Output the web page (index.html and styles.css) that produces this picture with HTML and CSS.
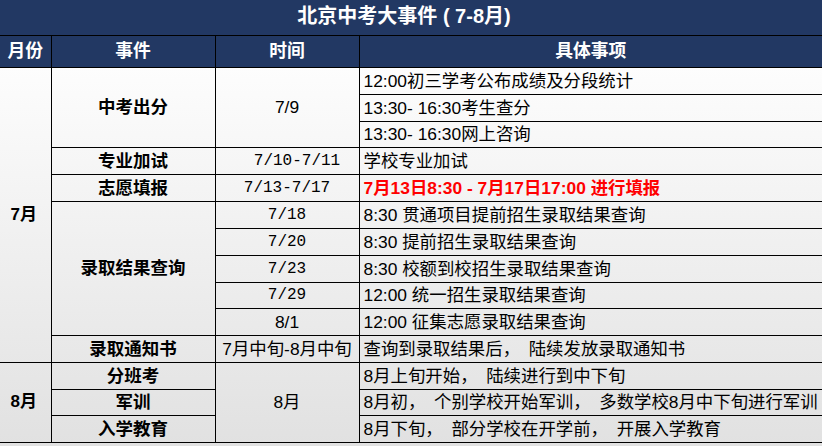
FILE: index.html
```html
<!DOCTYPE html>
<html lang="zh-CN">
<head>
<meta charset="utf-8">
<title>北京中考大事件</title>
<link rel="stylesheet" href="styles.css">
</head>
<body>
<table class="sched">
  <colgroup>
    <col class="c-month">
    <col class="c-event">
    <col class="c-time">
    <col class="c-detail">
  </colgroup>
  <thead>
    <tr class="title-row"><th colspan="4" class="title">北京中考大事件 ( 7-8月)</th></tr>
    <tr class="head-row">
      <th>月份</th><th>事件</th><th>时间</th><th>具体事项</th>
    </tr>
  </thead>
  <tbody>
    <tr>
      <td rowspan="11" class="month">7月</td>
      <td rowspan="3" class="event">中考出分</td>
      <td rowspan="3" class="time">7/9</td>
      <td class="detail">12:00初三学考公布成绩及分段统计</td>
    </tr>
    <tr><td class="detail">13:30- 16:30考生查分</td></tr>
    <tr class="short"><td class="detail">13:30- 16:30网上咨询</td></tr>
    <tr>
      <td class="event">专业加试</td>
      <td class="time mono shift">7/10-7/11</td>
      <td class="detail">学校专业加试</td>
    </tr>
    <tr>
      <td class="event">志愿填报</td>
      <td class="time mono">7/13-7/17</td>
      <td class="detail red">7月13日8:30 - 7月17日17:00 进行填报</td>
    </tr>
    <tr>
      <td rowspan="5" class="event">录取结果查询</td>
      <td class="time mono">7/18</td>
      <td class="detail">8:30 贯通项目提前招生录取结果查询</td>
    </tr>
    <tr><td class="time mono">7/20</td><td class="detail">8:30 提前招生录取结果查询</td></tr>
    <tr><td class="time mono">7/23</td><td class="detail">8:30 校额到校招生录取结果查询</td></tr>
    <tr class="short"><td class="time mono">7/29</td><td class="detail">12:00 统一招生录取结果查询</td></tr>
    <tr><td class="time">8/1</td><td class="detail">12:00 征集志愿录取结果查询</td></tr>
    <tr>
      <td class="event">录取通知书</td>
      <td class="time">7月中旬-8月中旬</td>
      <td class="detail">查询到录取结果后，　陆续发放录取通知书</td>
    </tr>
    <tr>
      <td rowspan="3" class="month">8月</td>
      <td class="event">分班考</td>
      <td rowspan="3" class="time">8月</td>
      <td class="detail">8月上旬开始，　陆续进行到中下旬</td>
    </tr>
    <tr class="short"><td class="event">军训</td><td class="detail">8月初，　个别学校开始军训，　多数学校8月中下旬进行军训</td></tr>
    <tr><td class="event">入学教育</td><td class="detail">8月下旬，　部分学校在开学前，　开展入学教育</td></tr>
  </tbody>
</table>
</body>
</html>
```

FILE: styles.css
```css
html, body {
  margin: 0;
  padding: 0;
}
body {
  width: 822px;
  height: 446px;
  overflow: hidden;
  background: linear-gradient(to bottom, #ffffff 0px, #fdfdfd 67px, #e1e1e1 446px);
  font-family: "Liberation Sans", "Noto Sans CJK SC", sans-serif;
  color: #000;
}
.sched {
  width: 822px;
  table-layout: fixed;
  border-collapse: collapse;
  font-size: 17px;
  line-height: 20px;
}
.c-month { width: 51px; }
.c-event { width: 164px; }
.c-time { width: 144px; }
.c-detail { width: 463px; }

.sched th, .sched td {
  padding: 0;
  border: 1px solid #000;
  overflow: hidden;
  white-space: nowrap;
}
.sched tr > :first-child { border-left: none; }
.sched tr > :last-child { border-right: none; }
.sched tr.title-row > th { border: none; border-bottom: 1px solid #000; }

.title-row { height: 35px; }
.sched .title {
  background: #223863;
  color: #fff;
  font-size: 20px;
  font-weight: bold;
  text-align: center;
  vertical-align: middle;
  padding-bottom: 2px;
  padding-right: 14px;
}
.head-row { height: 32px; }
.sched .head-row th {
  background: #223863;
  color: #fff;
  font-size: 17.8px;
  font-weight: bold;
  text-align: center;
  border-top: none;
}
.sched tbody tr { height: 27px; }
.sched tbody tr.short { height: 26px; }
.sched tbody tr:last-child td { border-bottom: 1px solid #000; }

.sched .month {
  font-weight: bold;
  text-align: center;
  vertical-align: middle;
  font-size: 17px;
  padding-right: 3px;
}
.sched .event {
  font-weight: bold;
  text-align: center;
  vertical-align: middle;
  font-size: 17.5px;
}
.sched .time {
  text-align: center;
  vertical-align: middle;
  font-size: 17.4px;
}
.sched .mono {
  font-family: "Liberation Mono", "Noto Sans CJK SC", monospace;
  font-size: 16px;
}
.sched .shift { padding-left: 20px; }
.sched .detail {
  text-align: left;
  padding-left: 4px;
  vertical-align: middle;
  font-size: 17.4px;
}
.sched .red {
  color: #ff0000;
  font-weight: bold;
}
```
